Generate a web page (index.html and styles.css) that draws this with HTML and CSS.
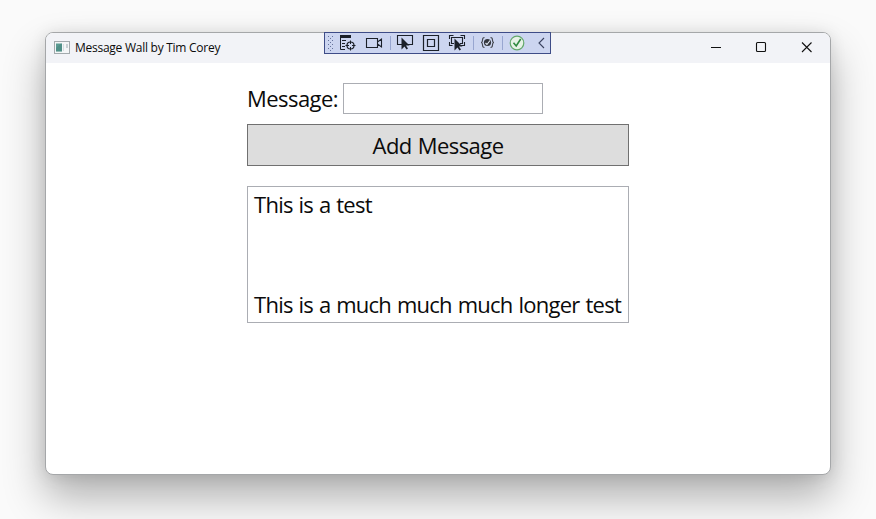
FILE: index.html
```
<!DOCTYPE html>
<html lang="en">
<head>
<meta charset="utf-8">
<title>Message Wall by Tim Corey</title>
<link rel="stylesheet" href="styles.css">
</head>
<body>
<main class="window">
  <header class="titlebar">
    <svg class="app-icon" width="16" height="14" viewBox="0 0 16 14"><rect x=".5" y=".5" width="15" height="12" fill="#f4f6f7" stroke="#a3aaad"/><rect x="2" y="2.5" width="6" height="8" fill="#5b9b93"/><path d="M2 10.500V7l5-4.500h1v8z" fill="#39776f" opacity=".3"/><path d="M9.500 3v7" stroke="#d5dde0"/><path d="M12 3h2v4l-2 0z" fill="#c8d1d4"/></svg>
    <h1 class="title">Message Wall by Tim Corey</h1>
    <div class="controls">
      <svg width="46" height="30" viewBox="0 0 46 30"><path d="M18 14.500h10" stroke="#111" stroke-width="1"/></svg>
      <svg width="45" height="30" viewBox="0 0 45 30"><rect x="17.500" y="9.500" width="9" height="9" rx="1" fill="none" stroke="#111" stroke-width="1.100"/></svg>
      <svg width="46" height="30" viewBox="0 0 46 30"><path d="M18 9.500l9.500 9.500M27.500 9.500l-9.500 9.500" stroke="#111" stroke-width="1.100"/></svg>
    </div>
  </header>
  <section class="content">
    <div class="field"><label for="message">Message:</label><input id="message" type="text"></div>
    <button class="add" type="button"><span>Add Message</span></button>
    <ul class="messages"><li>This is a test</li><li></li><li>This is a much much much longer test</li></ul>
  </section>
  <div class="debugbar">
    <svg width="227" height="22" viewBox="0 0 227 22" fill="none" stroke="#1b2029">
      <defs><pattern id="grip" width="4" height="4" patternUnits="userSpaceOnUse"><path d="M0 0h1v1H0zM2 2h1v1H2z" fill="#66739c" stroke="none"/></pattern></defs>
      <rect x="4" y="3" width="6" height="17" fill="url(#grip)" stroke="none"/>
      <path d="M16 3h11v3H16z" fill="#1b2029" stroke="none"/>
      <path d="M16.500 6v11.500H21M18 8.500h4M18 11.500h3M18 14.500h3"/>
      <circle cx="26.500" cy="13.500" r="3.500" stroke-width="1.200"/><path d="M26.500 8.500v3.500M26.500 15v3.500M21.500 13.500H25M28 13.500h3.500"/>
      <path d="M42.500 6.500h11v9h-11zM53.500 10l4-3v8l-4-3" stroke-width="1.100"/>
      <path d="M66.500 4v14M149.500 4v14M178.500 4v14" stroke="#98a6d0"/>
      <path d="M78 12.500h-4.500v-9h15v9H84" stroke-width="1.100"/>
      <path d="M77.500 5.500v12l3-3 2 3 1.500-1-2-3h3.500z" fill="#1b2029" stroke="none"/>
      <path d="M99.500 3.500h15v15h-15zM103.500 7.500h7v7h-7z" stroke-width="1.200"/>
      <path d="M125.500 7V3.500h4M136.500 3.500h4V7M125.500 10v3.500h3M137 13.500h3.500V10M130 11.500h-2.500v-6h11v6H136" stroke-width="1.100"/>
      <path d="M130.500 6.500v12l3-3 2 3 1.500-1-2-3h3.500z" fill="#1b2029" stroke="none"/>
      <path d="M160.500 5.500c-2 0-2 1-2 2.500s-.3 2.500-1.500 2.500c1.200 0 1.500 1 1.500 2.500s0 2.500 2 2.500M166.500 5.500c2 0 2 1 2 2.500s.3 2.500 1.500 2.500c-1.200 0-1.500 1-1.500 2.500s0 2.500-2 2.500" stroke="#454851" stroke-width="1.100"/>
      <circle cx="163.500" cy="10.500" r="3.600" fill="#33363d" stroke="none"/><path d="M161.500 11l1.500 1.500 3-4" stroke="#e6ebf7" stroke-width="1.100"/>
      <circle cx="193" cy="11" r="6.800" fill="#e6f2e6" stroke="#63a86b" stroke-width="1.200"/><path d="M189.500 10.800l2.700 3.200 4.500-7" stroke="#2f8a40" stroke-width="1.600"/>
      <path d="M220 6l-5 5 5 5" stroke="#39415f" stroke-width="1.100"/>
    </svg>
  </div>
</main>
</body>
</html>
```
FILE: styles.css
```
* { box-sizing: border-box; }
html { height: 100%; overflow: hidden; background: #fafafa; }
body {
  margin: 0; height: 100%; padding: 32px 45px 44px; overflow: hidden;
  color: #0b0b0b; font-family: "Open Sans", "Noto Sans", sans-serif;
}
.window {
  position: relative; height: 443px; background: #fff;
  border: 1px solid #a5a7a9; border-radius: 8px;
  box-shadow: 0 22px 42px rgba(0,0,0,.30), 0 1px 16px rgba(0,0,0,.10);
}
.titlebar {
  display: flex; align-items: center; height: 30px; padding-left: 8px;
  background: #f2f3f7; border-radius: 7px 7px 0 0;
}
.title { flex: 1; margin: 0 0 0 5px; font-size: 12px; font-weight: 400; line-height: 16px; letter-spacing: -.26px; white-space: nowrap; }
.controls { display: flex; }
.controls svg { display: block; }
.content { width: 382px; margin: 20px 0 0 201px; font-size: 22px; letter-spacing: -.55px; word-spacing: .8px; }
.field { display: flex; height: 31px; align-items: center; justify-content: space-between; width: 296px; white-space: nowrap; }
.field label { padding-bottom: 1px; }
.field input { width: 200px; height: 31px; padding: 0 3px; border: 1px solid #abadb3; border-radius: 0; background: #fff; font: inherit; outline: 0; }
.add { display: block; width: 100%; height: 42px; margin: 10px 0 20px; padding: 0; border: 1px solid #707070; border-radius: 0; background: #ddd; color: inherit; font: inherit; letter-spacing: inherit; word-spacing: inherit; }
.messages { display: flex; flex-direction: column; justify-content: space-between; height: 137px; margin: 0; padding: 2px 6px 3px; border: 1px solid #abadb3; list-style: none; line-height: 30px; letter-spacing: -.73px; white-space: nowrap; }
.debugbar { position: absolute; left: 278px; top: -1px; width: 227px; height: 22px; background: #ccd5f0; outline: 1px solid #3e4c87; outline-offset: -1px; }
.debugbar svg { display: block; }
```
